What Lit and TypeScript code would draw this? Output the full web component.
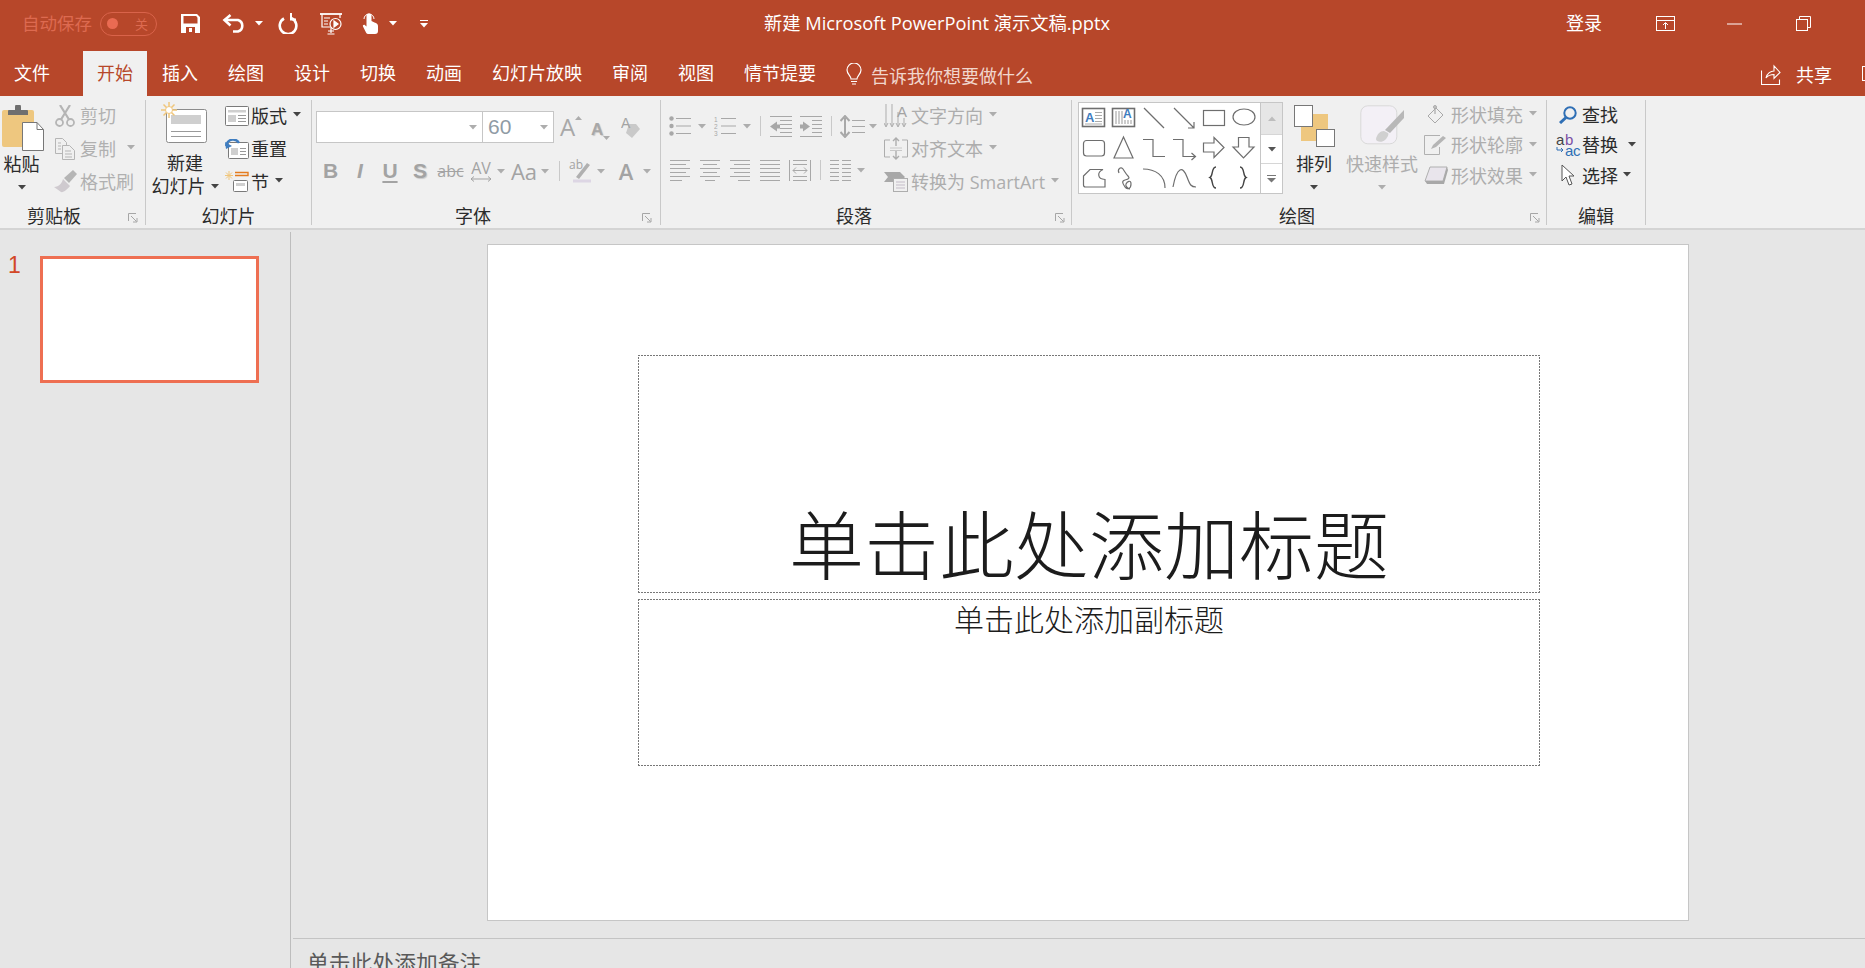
import { LitElement, html, svg, css } from "lit";
import { customElement } from "lit/decorators.js";

const caret = (c = "#444") => html`<svg class="caret" width="8" height="5" viewBox="0 0 8 5"><path d="M0 0h8L4 4.5z" fill="${c}"/></svg>`;
const dc = () => caret("#adadad");
const launcher = html`<svg class="launch" width="10" height="10" viewBox="0 0 10 10" fill="none" stroke="#a6a6a6"><path d="M.5 8V.5H8"/><path d="M3 3l5.5 5.5M5 9h4V5"/></svg>`;

const lines = (ys: number[], x1: number[], x2: number[]) => ys.map((y, i) => svg`<path d="M${x1[i]} ${y + 0.5}H${x2[i]}"/>`);

@customElement("app-root")
export class AppRoot extends LitElement {
  static styles = css`
    :host { display: block; width: 1865px; height: 968px; overflow: hidden; background: #e6e6e6;
      font-family: "Open Sans", "Noto Sans CJK SC", sans-serif; font-size: 18px; color: #2b2b2b; }
    svg { display: block; flex: none; }
    .titlebar { display: flex; height: 51px; box-sizing: border-box; padding-bottom: 4px; background: #b7472a; color: #fff; align-items: center; }
    .qat { width: 640px; display: flex; align-items: center; padding-left: 22px; box-sizing: border-box; }
    .autosave { width: 70px; color: #dd6a50; white-space: nowrap; font-size: 17.5px; margin-top: -3px; }
    .toggle { margin-left: 8px; width: 57px; height: 24px; box-sizing: border-box; border: 1px solid #d9634a; border-radius: 12px;
      display: flex; align-items: center; padding-left: 6px; color: #dd6a50; font-size: 13px; line-height: 20px; }
    .knob { width: 11px; height: 11px; border-radius: 50%; background: #ea6b52; margin-right: 17px; }
    .q1 { margin-left: 24px; } .q2 { margin-left: 22px; } .q3 { margin-left: 9px; } .q4 { margin-left: 15px; }
    .q5 { margin-left: 22px; } .q6 { margin-left: 19px; } .q7 { margin-left: 11px; } .q8 { margin-left: 23px; }
    .doc { width: 594px; text-align: center; font-size: 18.3px; white-space: nowrap; margin-top: -3px; }
    .win { flex: 1; display: flex; align-items: center; padding-left: 332px; }
    .win span { margin-top: -3px; }
    .w1 { margin-left: 54px; } .w2 { margin-left: 52px; } .w3 { margin-left: 54px; }
    .tabs { display: flex; height: 45px; background: #b7472a; color: #fff; align-items: center; }
    .tab { padding: 0 15px; line-height: 45px; white-space: nowrap; }
    .tab.file { padding: 0 33px 0 14px; }
    .tab.on { background: #f0f0f0; color: #b7472a; padding: 0 14px; }
    .tell { display: flex; align-items: center; margin-left: 15px; color: #f1d6cd; white-space: nowrap; }
    .tell span { margin-left: 9px; padding-top: 3px; }
    .share { margin-left: auto; display: flex; align-items: center; margin-right: -12px; }
    .share span { margin-left: 15px; margin-right: 30px; }
    .ribbon { display: flex; height: 134px; box-sizing: border-box; background: #f0f0f0; border-bottom: 2px solid #d4d4d4; padding: 4px 0 3px; }
    .grp { display: grid; grid-template-rows: 105px 20px; border-right: 1px solid #c9c9c9; box-sizing: border-box; flex: none; }
    .body { display: flex; min-width: 0; }
    .foot { position: relative; text-align: center; line-height: 22px; white-space: nowrap; }
    .launch { position: absolute; top: 8px; }
    .g-clip { width: 146px; } .g-clip .foot { padding-right: 37px; } .g-clip .launch { left: 128px; }
    .g-slide { width: 166px; }
    .g-font { width: 349px; } .g-font .foot { padding-right: 26px; } .g-font .launch { left: 330px; }
    .g-para { width: 411px; } .g-para .foot { padding-right: 24px; } .g-para .launch { left: 394px; }
    .g-draw { width: 475px; } .g-draw .foot { padding-right: 24px; } .g-draw .launch { left: 458px; }
    .g-edit { width: 99px; }
    .big { display: flex; flex-direction: column; align-items: center; padding-top: 5px; line-height: 23px; white-space: nowrap; }
    .big .ico { height: 48px; }
    .big .cr { height: 23px; display: flex; align-items: center; justify-content: center; }
    .off { color: #b0b0b0; }
    .paste { width: 43px; margin-left: 0; }
    .col3 { display: grid; grid-template-rows: repeat(3, 33px); }
    .row { display: flex; align-items: center; white-space: nowrap; padding-bottom: 4px; }
    .row > .ib { width: 24px; display: flex; justify-content: center; margin-right: 3px; flex: none; padding-top: 2px; }
    .row .caret { margin-left: 6px; }
    .clipcol { margin-left: 11px; } .clipcol .ib { width: 22px; margin-right: 4px; }
    .clipcol .caret { margin-left: 11px; }
    .newslide { width: 70px; margin-left: 4px; }
    .newslide .ico { height: 50px; margin: -3px 0 0 -2px; }
    .newslide .second { display: flex; align-items: center; }
    .newslide .second .caret { margin-left: 5px; }
    .slidecol { margin-left: 4px; } .slidecol .ib { width: 25px; margin-right: 2px; }
    .fontblk { padding: 11px 0 0 4px; }
    .fr1 { display: flex; align-items: center; height: 32px; }
    .combo { height: 32px; box-sizing: border-box; background: #fff; border: 1px solid #c6c6c6; display: flex; align-items: center; justify-content: flex-end; padding-right: 5px; }
    .combo.a { width: 166px; border-right: none; }
    .combo.b { width: 72px; justify-content: space-between; padding-left: 5px; color: #8f9ba5; font-size: 21px; font-weight: 300; }
    .grow { display: flex; color: #a8a8a8; margin-left: 6px; height: 26px; line-height: 26px; font-size: 24px; width: 30px; }
    .grow.s { font-size: 17px; margin-left: 1px; align-items: flex-end; }
    .grow .up { margin-top: 2px; }
    .fr2 { display: grid; grid-template-columns: 29px 30px 30px 30px 31px 30px 10px 36px 6px 22px 20px 22px 28px 14px; height: 22px; margin-top: 16px; align-items: center; justify-items: center; color: #a3a3a3; line-height: 22px; }
    .b { font: bold 21px "Liberation Sans", sans-serif; }
    .i { font: italic bold 21px "Liberation Sans", sans-serif; }
    .u { font: bold 21px "Liberation Sans", sans-serif; text-decoration: underline; text-underline-offset: 3px; }
    .s { font: bold 21px "Liberation Sans", sans-serif; text-shadow: 1px 1px 1px #c8c8c8; }
    .abc { font-size: 16px; text-decoration: line-through; }
    .av { display: flex; flex-direction: column; align-items: center; font-size: 16px; line-height: 16px; }
    .aa { font-size: 22px; }
    .aB { font-size: 22px; font-weight: 600; }
    .hl { display: flex; flex-direction: column; position: relative; font-size: 12px; line-height: 12px; width: 22px; height: 24px; }
    .hl svg { position: absolute; left: 4px; top: 2px; }
    .sep { width: 1px; height: 20px; background: #c9c9c9; }
    .parablk { padding: 14px 0 0 4px; width: 216px; flex: none; box-sizing: border-box; }
    .pr1, .pr2 { display: grid; height: 24px; align-items: center; justify-items: center; }
    .pr1 { grid-template-columns: 30px 14px 32px 12px 14px 28px 32px 8px 34px 8px; }
    .pr2 { grid-template-columns: 30px 30px 30px 30px 30px 10px 30px 12px; margin-top: 20px; }
    .textcol { color: #adadad; margin-left: 7px; }
    .gallery { margin: 2px 0 0 6px; width: 205px; height: 92px; box-sizing: border-box; border: 1px solid #c6c6c6; background: #fff; display: flex; flex: none; }
    .cells { width: 181px; display: grid; grid-template-columns: repeat(6, 30px); grid-template-rows: repeat(3, 30px); flex: none; }
    .cells svg { fill: none; stroke: #6e6e6e; stroke-width: 1.2; }
    .scroll { flex: 1; border-left: 1px solid #c6c6c6; display: grid; grid-template-rows: 31px 29px 1fr; }
    .scroll div { display: flex; align-items: center; justify-content: center; border-top: 1px solid #d6d6d6; }
    .scroll div:first-child { background: #e6e6e6; border-top: none; }
    .arrange { width: 46px; margin-left: 8px; }
    .quick { width: 80px; margin-left: 5px; color: #adadad; }
    .shapecol { grid-template-rows: 31px 30px 31px; margin-left: 2px; color: #adadad; }
    .editcol { grid-template-rows: 31px 30px 31px; margin-left: 9px; }
    .editcol .ib { margin-right: 2px; }
    .editcol .c1 .caret { margin-left: 10px; } .editcol .c2 .caret { margin-left: 5px; }
    .abac { display: grid; grid-template-columns: 9px 15px; grid-template-rows: 11px 11px; align-items: center; font: 15px/11px "Liberation Sans", sans-serif; }
    .abac .k { color: #444; } .abac .p { color: #7b4fa5; } .abac .bl { color: #2f6fb5; letter-spacing: -.3px; }
    .main { display: flex; height: 738px; }
    .side { width: 291px; flex: none; box-sizing: border-box; margin-top: 2px; border-right: 1px solid #bdbdbd; display: flex; align-items: flex-start; padding: 24px 0 0 8px; }
    .num { font: 23px/18px "Liberation Sans", sans-serif; color: #d24726; width: 32px; }
    .thumb { width: 219px; height: 127px; box-sizing: border-box; border: 3px solid #ee6f52; background: #fff; }
    .editor { flex: 1; display: flex; flex-direction: column; min-width: 0; }
    .stage { height: 708px; flex: none; padding: 14px 0 0 196px; box-sizing: border-box; }
    .slide { width: 1202px; height: 677px; box-sizing: border-box; background: #fff; border: 1px solid #c6c6c6; padding: 110px 0 0 150px; display: flex; flex-direction: column; gap: 6px; }
    .ph { width: 902px; box-sizing: border-box; display: flex; justify-content: center; flex: none; color: #1c1c1c; white-space: nowrap;
      background:
        repeating-linear-gradient(90deg, #777 0 2px, transparent 2px 3px) top / 100% 1px no-repeat,
        repeating-linear-gradient(90deg, #777 0 2px, transparent 2px 3px) bottom / 100% 1px no-repeat,
        repeating-linear-gradient(0deg, #777 0 2px, transparent 2px 3px) left / 1px 100% no-repeat,
        repeating-linear-gradient(0deg, #777 0 2px, transparent 2px 3px) right / 1px 100% no-repeat; }
    .ph.t { height: 238px; align-items: flex-end; font-size: 75px; font-weight: 300; line-height: 90px; padding-bottom: 6px; font-family: "Noto Sans CJK SC", sans-serif; }
    .ph.st { height: 167px; align-items: flex-start; font-size: 30px; line-height: 38px; font-weight: 300; font-family: "Noto Sans CJK SC", sans-serif; }
    .notes { margin-left: 2px; border-top: 1px solid #c4c4c4; padding: 8px 0 0 14px; font-size: 21.8px; line-height: 30px; color: #595959; font-family: "Noto Sans CJK SC", sans-serif; }
  `;

  private shapes() {
    const c = (b: unknown) => html`<svg width="30" height="30" viewBox="0 0 30 30">${b}</svg>`;
    return [
      c(svg`<rect x="3.5" y="5.5" width="22" height="18" stroke-width="1.6"/><text x="6" y="19" font-size="13" font-weight="700" fill="#3f7dc0" stroke="none" font-family="Liberation Sans">A</text><path d="M16 9.5h7M16 12.5h7M16 15.5h7M16 18.5h7M6 21h17" stroke="#aaa" stroke-width="1"/>`),
      c(svg`<rect x="3.5" y="5.5" width="22" height="18" stroke-width="1.6"/><text x="14" y="15" font-size="12" font-weight="700" fill="#3f7dc0" stroke="none" font-family="Liberation Sans">A</text><path d="M7 8v13M10 8v13M13 8v13M16 17v4M19 17v4M22 17v4" stroke="#999" stroke-width="1"/>`),
      c(svg`<path d="M5 5l20 20"/>`),
      c(svg`<path d="M5 5l20 20M25 19v6h-6"/>`),
      c(svg`<rect x="4.5" y="7.5" width="21" height="15"/>`),
      c(svg`<ellipse cx="15" cy="14" rx="11" ry="8"/>`),
      c(svg`<rect x="4.5" y="7.5" width="21" height="15.5" rx="3"/>`),
      c(svg`<path d="M14.5 4L24 25H5z"/>`),
      c(svg`<path d="M4 6.5H14V23.5H26"/>`),
      c(svg`<path d="M4 6.5H14V23.5H26M22.5 20l4 3.5-4 3.5"/>`),
      c(svg`<path d="M4.5 10H15V4.500L25 14.500 15 24.500V19H4.500z"/>`),
      c(svg`<path d="M9.500 4.500H20V14H25L14.500 25 4 14H9.500z"/>`),
      c(svg`<path d="M4.500 13L11 6.500H24C18 9 18 16 26 16.500V24H6.500Q4.500 24 4.500 22z"/>`),
      c(svg`<path d="M10 10C8 6 12 3 14 6S17 11 19 13 20 16 16 17 14 21 16 24 22 26 22 21 18 19 17 21 19 26 21 26"/>`),
      c(svg`<path d="M4 6C16 6 26 12 26 25"/>`),
      c(svg`<path d="M4 24C8 3 14 3 18 14 21 22 22 24 27 24"/>`),
      c(svg`<path d="M17 4C12 4 14.500 13 11 14.500 14.500 16 12 25 17 25" stroke="#444" stroke-width="1.400"/>`),
      c(svg`<path d="M11 4C16 4 13.500 13 17 14.500 13.500 16 16 25 11 25" stroke="#444" stroke-width="1.400"/>`),
    ];
  }

  render() {
    return html`
      <div class="titlebar">
        <div class="qat">
          <span class="autosave">自动保存</span>
          <div class="toggle"><i class="knob"></i>关</div>
          <svg class="q1" width="19" height="19" viewBox="0 0 19 19"><path fill="#fff" fill-rule="evenodd" d="M0 0h16l3 3v16H0zM2.500 2v7.500h14V3.800L15.200 2zM5 13v6h9v-6zM8 14h3v4H8z"/></svg>
          <svg class="q2" width="24" height="19" viewBox="0 0 24 19" fill="none" stroke="#fff" stroke-width="2.600"><path d="M3 6h13a6 6 0 0 1 0 11.500h-5"/><path d="M8.500 1L2.500 6l6 5.500"/></svg>
          ${this.c("#fff", "q3")}
          <svg class="q4" width="20" height="21" viewBox="0 0 20 21" fill="none" stroke="#fff" stroke-width="2.600"><path d="M6 5.500a8.300 8.300 0 1 0 7.500-.300"/><path d="M13 0v6.500h5" stroke-width="2"/></svg>
          <svg class="q5" width="22" height="22" viewBox="0 0 22 22" fill="none" stroke="#fff" stroke-width="1.200"><path d="M0 1h22" stroke-width="1.800"/><path d="M2 1v13h8M20 1v4"/><path d="M4 5h6M4 8h4M4 11h4"/><circle cx="15.500" cy="11" r="5.500"/><path d="M14 8l4 3-4 3z" fill="#fff"/><path d="M8 18h6M11 14v6M7.500 21h7"/></svg>
          <svg class="q6" width="17" height="21" viewBox="0 0 17 21"><path fill="#fff" d="M5.500 8V3a2.500 2.500 0 0 1 5 0v5l3 1.500c2 .8 3.500 1.500 3.500 3.500v5c0 2-1 3-3 3H8c-1.500 0-2.500-.6-3-1.600L2 13.500c-.6-1.300 1-2.300 2-1.300l1.500 1.300z"/><path fill="none" stroke="#fff" d="M3 6a5 5 0 1 1 10 0"/></svg>
          ${this.c("#fff", "q7")}
          <svg class="q8" width="8" height="8" viewBox="0 0 8 8"><path d="M0 .5h8" stroke="#fff"/><path d="M0 3h8L4 7.500z" fill="#fff"/></svg>
        </div>
        <div class="doc">新建 Microsoft PowerPoint 演示文稿.pptx</div>
        <div class="win">
          <span>登录</span>
          <svg class="w1" width="19" height="15" viewBox="0 0 19 15" fill="none" stroke="#fff"><rect x=".5" y=".5" width="18" height="14"/><path d="M.5 4.500h18M9.500 13V7M7 9l2.500-2.500L12 9"/></svg>
          <svg class="w2" width="15" height="2" viewBox="0 0 15 2"><path d="M0 1h15" stroke="#fff"/></svg>
          <svg class="w3" width="15" height="15" viewBox="0 0 15 15" fill="none" stroke="#fff"><rect x=".5" y="3.500" width="11" height="11"/><path d="M3.500 3.500v-3h11v11h-3"/></svg>
        </div>
      </div>
      <div class="tabs">
        <div class="tab file">文件</div><div class="tab on">开始</div>
        ${["插入", "绘图", "设计", "切换", "动画", "幻灯片放映", "审阅", "视图", "情节提要"].map((t) => html`<div class="tab">${t}</div>`)}
        <div class="tell">
          <svg width="16" height="22" viewBox="0 0 16 22" fill="none" stroke="#fff" stroke-width="1.200"><path d="M5 16c0-3-4-5-4-9a7 7 0 0 1 14 0c0 4-4 6-4 9z"/><path d="M5 18.500h6M6 21h4"/></svg>
          <span>告诉我你想要做什么</span>
        </div>
        <div class="share">
          <svg width="20" height="22" viewBox="0 0 20 22" fill="none" stroke="#fff" stroke-width="1.100"><path d="M.5 7.500v14h18v-5"/><path d="M5 15c1-5 5-7 8-7V3l6 6.500-6 6v-4c-3 0-6 1-8 3.500z"/></svg>
          <span>共享</span>
          <svg width="15" height="15" viewBox="0 0 15 15" fill="none" stroke="#fff"><rect x=".5" y=".5" width="14" height="14"/></svg>
        </div>
      </div>
      <div class="ribbon">
        ${this.clip()} ${this.slides()} ${this.font()} ${this.para()} ${this.draw()} ${this.edit()}
      </div>
      <div class="main">
        <div class="side"><div class="num">1</div><div class="thumb"></div></div>
        <div class="editor">
          <div class="stage">
            <div class="slide">
              <div class="ph t">单击此处添加标题</div>
              <div class="ph st">单击此处添加副标题</div>
            </div>
          </div>
          <div class="notes">单击此处添加备注</div>
        </div>
      </div>
    `;
  }

  private c(col: string, cls: string) {
    return html`<svg class=${cls} width="8" height="5" viewBox="0 0 8 5"><path d="M0 0h8L4 4.500z" fill=${col}/></svg>`;
  }

  private clip() {
    return html`<div class="grp g-clip"><div class="body">
      <div class="big paste">
        <div class="ico"><svg width="44" height="46" viewBox="0 0 44 46"><rect x="2" y="5" width="32" height="37" rx="2" fill="#eec77f"/><path d="M9 5h6V2a3 3 0 0 1 6 0v3h6q1 0 1 1v4H8V6q0-1 1-1z" fill="#6f6f6f"/><path d="M22.500 17.500H37l6.500 7v21h-21z" fill="#fff" stroke="#777"/><path d="M37 17.500v7h6.500" fill="none" stroke="#777"/></svg></div>
        <div>粘贴</div><div class="cr">${caret()}</div>
      </div>
      <div class="col3 clipcol off">
        <div class="row"><div class="ib"><svg width="20" height="22" viewBox="0 0 20 22" fill="none" stroke="#b5b5b5" stroke-width="1.800"><circle cx="4.500" cy="17.500" r="3.500"/><circle cx="15.500" cy="17.500" r="3.500"/><path d="M6 14.500L15 0M14 14.500L5 0" stroke-width="2.200"/></svg></div>剪切</div>
        <div class="row"><div class="ib"><svg width="20" height="22" viewBox="0 0 20 22" fill="#f0f0f0" stroke="#b5b5b5"><path d="M.5.500h7l4 4v11H.5z"/><path d="M7.500 7.500h7l5 5v9h-12z"/><path d="M10 13h6M10 16h7M10 19h7M3 5h3M3 8h3M3 11h3"/></svg></div>复制${dc()}</div>
        <div class="row"><div class="ib"><svg width="23" height="23" viewBox="0 0 23 23"><path d="M0 17c5 0 8-4 9-8l7 7c-2 3-7 7-9 6z" fill="#cfcacf"/><path d="M10 8l9-8 4 4-8 9z" fill="#b5b5b5"/></svg></div>格式刷</div>
      </div>
    </div><div class="foot">剪贴板${launcher}</div></div>`;
  }

  private slides() {
    return html`<div class="grp g-slide"><div class="body">
      <div class="big newslide">
        <div class="ico"><svg width="46" height="42" viewBox="0 0 46 42" fill="none"><rect x="5.500" y="7.500" width="40" height="33" rx="2" fill="#fff" stroke="#8c8c8c"/><rect x="10" y="13" width="30" height="9" fill="#cfcfcf"/><path d="M10 29.500h30M10 34.500h30" stroke="#9a9a9a"/><path d="M8 0v16M0 8h16M2.500 2.500l11 11M13.500 2.500l-11 11" stroke="#f0c67b" stroke-width="1.500"/><circle cx="8" cy="8" r="3.500" fill="#fff" stroke="#f0c67b"/></svg></div>
        <div>新建</div><div class="second">幻灯片${caret()}</div>
      </div>
      <div class="col3 slidecol">
        <div class="row"><div class="ib"><svg width="24" height="20" viewBox="0 0 24 20" fill="#fff" stroke="#7a7a7a"><rect x=".5" y=".5" width="23" height="19" rx="1"/><path d="M3 4h18v2.500H3z" fill="#cfcfcf" stroke="none"/><path d="M3 9h8v7H3z" fill="#cfcfcf" stroke="none"/><path d="M13 9.500h8M13 12.500h8M13 15.500h8" stroke="#999"/></svg></div>版式${caret()}</div>
        <div class="row"><div class="ib"><svg width="24" height="20" viewBox="0 0 24 20" fill="#fff" stroke="#7a7a7a"><rect x="3.500" y="3.500" width="20" height="16" rx="1"/><path d="M6 9h7v7H6z" fill="#cfcfcf" stroke="none"/><path d="M15 9.500h6M15 12.500h6M15 15.500h6" stroke="#999"/><path d="M1 7c2-8 10-8 13-3" fill="none" stroke="#3f7dc0" stroke-width="2.400"/><path d="M0 3l1 7 6-3z" fill="#3f7dc0" stroke="none"/></svg></div>重置</div>
        <div class="row"><div class="ib"><svg width="24" height="21" viewBox="0 0 24 21" fill="none"><path d="M4 0v9M0 4.500h8M1 1.500l6 6M7 1.500l-6 6" stroke="#f0c67b"/><path d="M10 1.500h13v3H10" stroke="#e47b1e" stroke-width="1.400"/><rect x="8.500" y="9.500" width="14" height="11" rx="1" fill="#fff" stroke="#7a7a7a"/><rect x="11" y="12" width="9" height="3" fill="#cfcfcf"/></svg></div>节${caret()}</div>
      </div>
    </div><div class="foot">幻灯片</div></div>`;
  }

  private font() {
    return html`<div class="grp g-font"><div class="fontblk">
      <div class="fr1">
        <div class="combo a">${dc()}</div><div class="combo b">60${dc()}</div>
        <div class="grow">A<svg class="up" width="7" height="4" viewBox="0 0 7 4"><path d="M0 4h7L3.500 0z" fill="#adadad"/></svg></div>
        <div class="grow s">A<svg class="up" width="7" height="4" viewBox="0 0 7 4"><path d="M0 0h7L3.500 4z" fill="#adadad"/></svg></div>
        <svg width="20" height="22" viewBox="0 0 20 22"><path d="M8 8l7 0 4 5-8 9-6-5z" fill="#c9c9c9"/><text x="0" y="12" font-size="14" fill="#a3a3a3" font-family="Liberation Sans">A</text></svg>
      </div>
      <div class="fr2">
        <span class="b">B</span><span class="i">I</span><span class="u">U</span><span class="s">S</span><span class="abc">abc</span>
        <span class="av">AV<svg width="22" height="6" viewBox="0 0 22 6" fill="none" stroke="#a3a3a3"><path d="M1 3h20M4 .5L1 3l3 2.500M18 .5L21 3l-3 2.500"/></svg></span>
        ${dc()}<span class="aa">Aa</span>${dc()}<i class="sep"></i>
        <span class="hl">ab<svg width="18" height="22" viewBox="0 0 18 22"><path d="M3 16L14 2l3 2L6 18z" fill="#b0b0b0"/><path d="M0 20h18" stroke="#ddd6e4" stroke-width="3"/></svg></span>
        ${dc()}<span class="aB">A</span>${dc()}
      </div>
    </div><div class="foot">字体${launcher}</div></div>`;
  }

  private para() {
    const st = "#a8a8a8";
    const g = (w: number, h: number, b: unknown) => html`<svg width=${w} height=${h} viewBox="0 0 ${w} ${h}" fill="none" stroke=${st}>${b}</svg>`;
    const al = (a: number[], b: number[]) => g(20, 21, lines([0, 4, 8, 12, 16, 20], a, b));
    return html`<div class="grp g-para"><div class="body">
      <div class="parablk">
        <div class="pr1">
          ${g(22, 20, svg`<circle cx="2.500" cy="2.500" r="2.200" fill="${st}" stroke="none"/><circle cx="2.500" cy="10" r="2.200" fill="${st}" stroke="none"/><circle cx="2.500" cy="17.500" r="2.200" fill="${st}" stroke="none"/><path d="M7 2.500h15M7 10h15M7 17.500h15"/>`)}${dc()}
          ${g(22, 21, svg`<text x="0" y="6" font-size="6.500" fill="${st}" stroke="none" font-family="Liberation Sans">1</text><text x="0" y="13" font-size="6.500" fill="${st}" stroke="none" font-family="Liberation Sans">2</text><text x="0" y="20" font-size="6.500" fill="${st}" stroke="none" font-family="Liberation Sans">3</text><path d="M7 2.500h15M7 10h15M7 17.500h15"/>`)}${dc()}
          <i class="sep"></i>
          ${g(22, 21, svg`<path d="M0 .5h22M10 4.500h12M10 8.500h12M10 12.500h12M10 16.500h12M0 20.500h22"/><path d="M0 10.500l7-5v3h3v4H7v3z" fill="${st}" stroke="none"/>`)}
          ${g(22, 21, svg`<path d="M0 .5h22M12 4.500h10M12 8.500h10M12 12.500h10M12 16.500h10M0 20.500h22"/><path d="M10 10.500l-7-5v3H0v4h3v3z" fill="${st}" stroke="none"/>`)}
          <i class="sep"></i>
          ${g(25, 23, svg`<path d="M5 3v17" stroke-width="2"/><path d="M.5 6L5 1l4.500 5M.5 17L5 22l4.500-5" stroke-width="2"/><path d="M12 5.500h13M12 11.500h13M12 17.500h13"/>`)}${dc()}
        </div>
        <div class="pr2">
          ${al([0, 0, 0, 0, 0, 0], [20, 16, 20, 16, 20, 12])}
          ${al([0, 3, 0, 3, 0, 5], [20, 17, 20, 17, 20, 15])}
          ${al([0, 4, 0, 4, 0, 8], [20, 20, 20, 20, 20, 20])}
          ${al([0, 0, 0, 0, 0, 0], [20, 20, 20, 20, 20, 20])}
          ${g(22, 21, svg`<path d="M.5 0v21M21.500 0v21M4 .5h14M4 20.500h14M4 16.500h14M4 4.500h14M4 10.500h14M7 7.500L4 10.500l3 3M15 7.500l3 3-3 3"/>`)}
          <i class="sep"></i>
          ${g(21, 21, svg`<path d="M0 .5h9M0 4.500h9M0 8.500h9M0 12.500h9M0 16.500h9M0 20.500h9M12 .5h9M12 4.500h9M12 8.500h9M12 12.500h9M12 16.500h9M12 20.500h9"/>`)}${dc()}
        </div>
      </div>
      <div class="col3 textcol">
        <div class="row"><div class="ib"><svg width="24" height="24" viewBox="0 0 24 24" fill="none" stroke="#adadad"><path d="M2 0v22M0 19l2 4 2-4M8 0v22M6 19l2 4 2-4M14 8v14M12 19l2 4 2-4M20 14v8M18 19l2 4 2-4"/><text x="13" y="13" font-size="15" fill="#a3a3a3" stroke="none" font-family="Liberation Sans">A</text></svg></div>文字方向${dc()}</div>
        <div class="row"><div class="ib"><svg width="24" height="23" viewBox="0 0 24 23" fill="none" stroke="#adadad"><path d="M6 3H.5v17H6M18 3h5.500v17H18"/><path d="M12 1v8M9 4l3-3 3 3M12 14v8M9 19l3 3 3-3" stroke-width="1.400"/><path d="M6 11h12M6 13.500h12" stroke="#c8c8c8"/></svg></div>对齐文本${dc()}</div>
        <div class="row"><div class="ib"><svg width="24" height="20" viewBox="0 0 24 20"><path d="M0 0h16l5 5-5 5H0l4-5z" fill="#a8a8a8"/><rect x="9.500" y="6.500" width="14" height="13" fill="#f0f0f0" stroke="#adadad"/><path d="M12 10h9M12 13h9M12 16h9" stroke="#c4bcc8"/></svg></div>转换为 SmartArt${dc()}</div>
      </div>
    </div><div class="foot">段落${launcher}</div></div>`;
  }

  private draw() {
    return html`<div class="grp g-draw"><div class="body">
      <div class="gallery">
        <div class="cells">${this.shapes()}</div>
        <div class="scroll">
          <div><svg width="8" height="5" viewBox="0 0 8 5"><path d="M0 5h8L4 .5z" fill="#bdbdbd"/></svg></div>
          <div>${caret("#555")}</div>
          <div><svg width="9" height="8" viewBox="0 0 9 8"><path d="M0 .5h9" stroke="#777"/><path d="M0 3h9L4.500 7.500z" fill="#777"/></svg></div>
        </div>
      </div>
      <div class="big arrange">
        <div class="ico"><svg width="41" height="42" viewBox="0 0 41 42"><rect x="7" y="9" width="27" height="27" fill="#eec77f"/><rect x=".5" y=".5" width="18" height="21" fill="#fff" stroke="#777"/><rect x="22.500" y="24.500" width="18" height="17" fill="#fff" stroke="#777"/></svg></div>
        <div>排列</div><div class="cr">${caret()}</div>
      </div>
      <div class="big quick">
        <div class="ico"><svg width="44" height="42" viewBox="0 0 44 42"><rect x=".8" y=".8" width="36" height="38" rx="7" fill="#f3f0f6" stroke="#d9d9d9"/><path d="M44 13L30 28l-5-3L44 5z" fill="#b8b8b8"/><path d="M24 26c-4 0-7 3-8 8 0 3 6 4 9 1 3-3 4-6 3-7z" fill="#d0d0d0"/></svg></div>
        <div>快速样式</div><div class="cr">${dc()}</div>
      </div>
      <div class="col3 shapecol">
        <div class="row"><div class="ib"><svg width="19" height="20" viewBox="0 0 19 20" fill="none" stroke="#a8a8a8"><path d="M9 3L1 11l7 7 8-8z"/><path d="M8 1v8" stroke-width="1.200"/><circle cx="8" cy="2" r="1.500"/></svg></div>形状填充${dc()}</div>
        <div class="row"><div class="ib"><svg width="24" height="20" viewBox="0 0 24 20" fill="none" stroke="#b0b0b0"><path d="M16 .5H.5v19h15V12"/><path d="M7 14l2-4L19 1l3 2L12 12z" fill="#b5b5b5" stroke="none"/></svg></div>形状轮廓${dc()}</div>
        <div class="row"><div class="ib"><svg width="24" height="20" viewBox="0 0 24 20"><path d="M6 1h17l-4 14H1z" fill="#e9e5ec" stroke="#b0b0b0"/><path d="M1 15h18l4-14 1 3-4 14H3z" fill="#a8a8a8"/></svg></div>形状效果${dc()}</div>
      </div>
    </div><div class="foot">绘图${launcher}</div></div>`;
  }

  private edit() {
    return html`<div class="grp g-edit"><div class="body">
      <div class="col3 editcol">
        <div class="row"><div class="ib"><svg width="18" height="18" viewBox="0 0 18 18" fill="none" stroke="#2f6fb5"><circle cx="11" cy="7" r="5.700" stroke-width="2"/><path d="M7 11.500L1 17" stroke-width="3"/></svg></div>查找</div>
        <div class="row c1"><div class="ib"><div class="abac"><span class="k">a</span><span class="p">b</span><svg width="8" height="7" viewBox="0 0 8 7" fill="none" stroke="#2f6fb5"><path d="M1 0v3h6M5 1l2 2-2 2"/></svg><span class="bl">ac</span></div></div>替换${caret()}</div>
        <div class="row c2"><div class="ib"><svg width="14" height="23" viewBox="0 0 14 23" fill="#fff" stroke="#555"><path d="M1 1v16l4-4 3 8 3-1-3-8h5z"/></svg></div>选择${caret()}</div>
      </div>
    </div><div class="foot">编辑</div></div>`;
  }
}
